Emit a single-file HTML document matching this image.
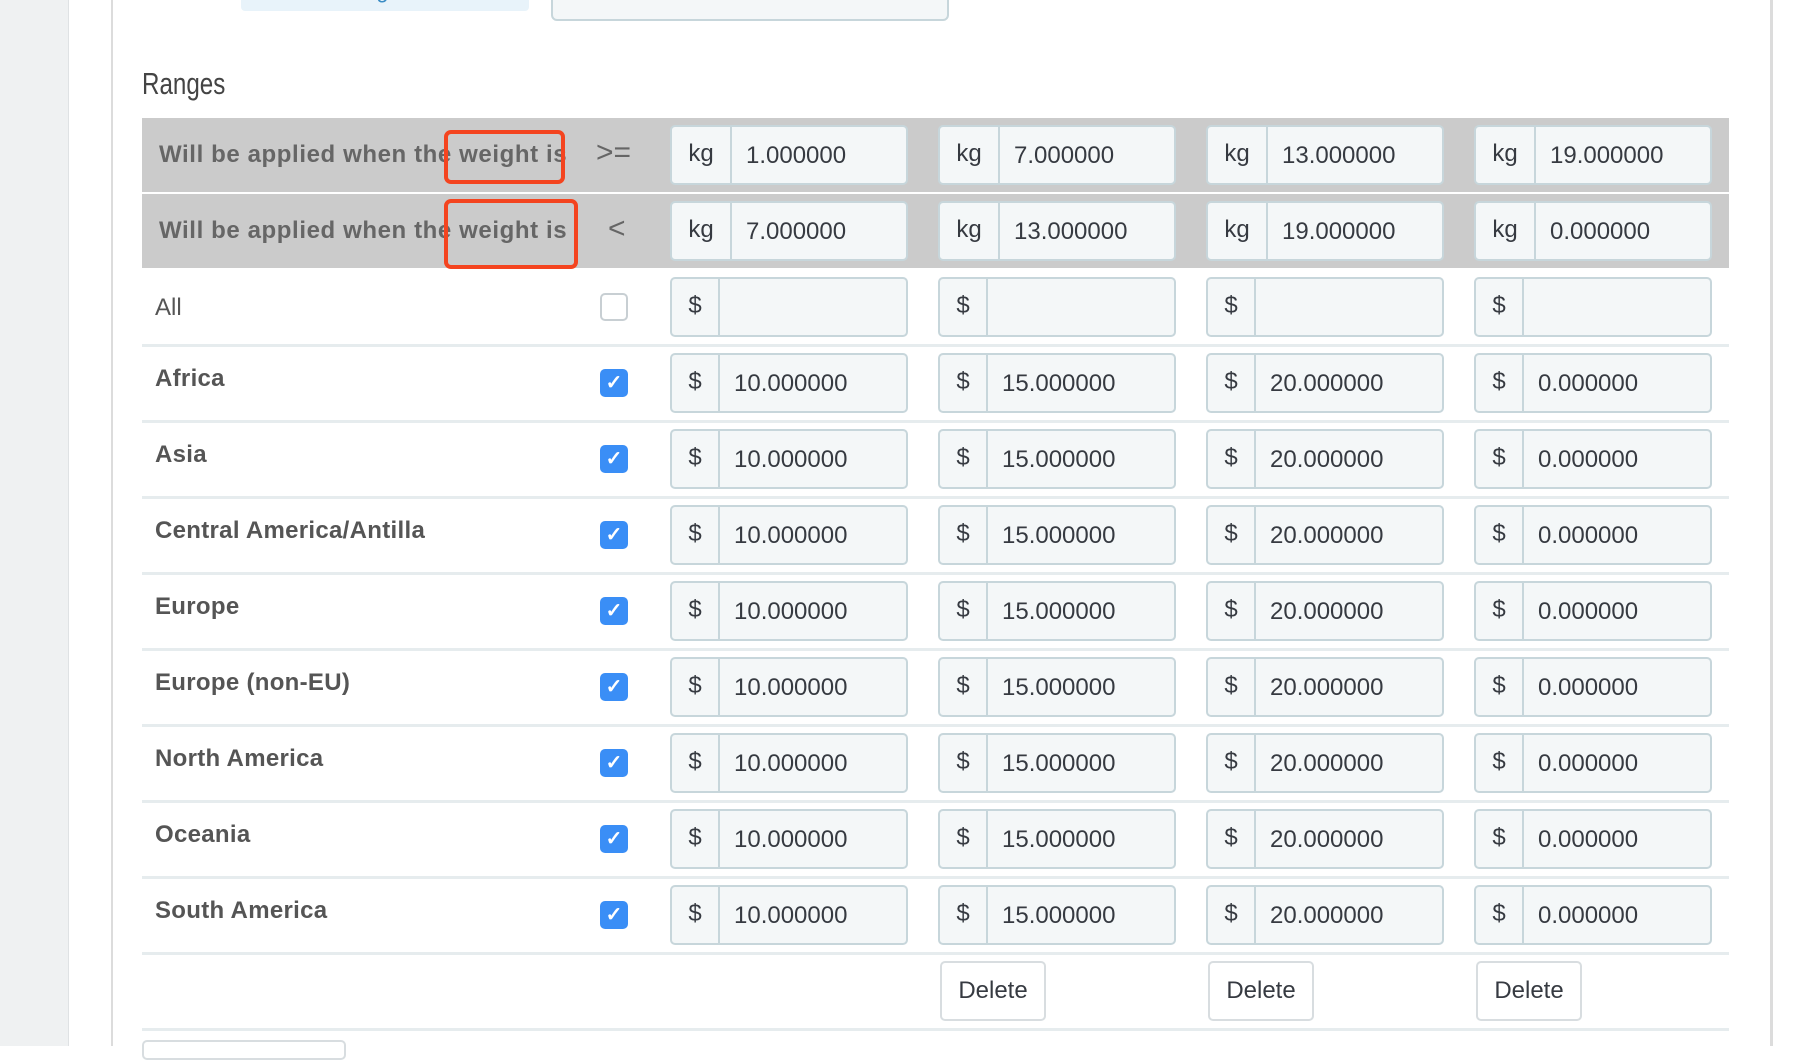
<!DOCTYPE html>
<html><head><meta charset="utf-8"><style>
*{box-sizing:border-box;margin:0;padding:0}
body{width:1802px;height:1046px;overflow:hidden;background:#fff;font-family:"Liberation Sans",sans-serif;position:relative}
.a{position:absolute}
.ig{position:absolute;width:238px;height:60px;border:2px solid #c7d6db;border-radius:5px;background:#f4f7f8;color:#363a41;font-size:24px}
.ig .ad{position:absolute;left:0;top:0;bottom:0;border-right:2px solid #c7d6db;text-align:center;line-height:54px}
.ig .v{position:absolute;top:0;line-height:58px}
.lbl{position:absolute;left:155px;font-weight:bold;font-size:24px;color:#555;letter-spacing:0.3px}
.cb{position:absolute;left:600px;width:28px;height:28px;border-radius:5px;background:#3a8ef6;color:#fff;text-align:center;line-height:28px;font-size:20px;font-weight:bold}
.sep{position:absolute;left:142px;width:1587px;height:3px;background:#e6ecee}
.btn{position:absolute;top:961px;width:106px;height:60px;border:2px solid #d8dde0;border-radius:5px;background:#fff;font-size:24px;color:#363a41;text-align:center;line-height:56px}
.hd{position:absolute;left:142px;width:1587px;height:74px;background:#cbcbcb}
.ht{position:absolute;left:159px;font-weight:bold;font-size:24px;color:#666;letter-spacing:0.6px}
.red{position:absolute;border:4px solid #f4441f;border-radius:7px}
</style></head><body>
<div class="a" style="left:0;top:0;width:69px;height:1046px;background:#eff1f2;border-right:1px solid #dfe2e4"></div>
<div class="a" style="left:111px;top:0;width:2px;height:1046px;background:#dcdcdc"></div>
<div class="a" style="left:1770px;top:0;width:3px;height:1046px;background:#dcdcdc"></div>
<div class="a" style="left:241px;top:-20px;width:288px;height:31px;background:#e8f3fa;border-radius:4px;color:#3a8cc4;font-size:22px;line-height:22px;text-align:center">Out of range behavior</div>
<div class="a" style="left:551px;top:-30px;width:398px;height:51px;background:#f4f7f8;border:2px solid #c7d6db;border-radius:6px"></div>
<div class="a" style="left:142px;top:66px;font-size:31px;color:#444;transform:scaleX(0.78);transform-origin:left">Ranges</div>

<div class="hd" style="top:118px"></div>
<div class="hd" style="top:194px"></div>
<div class="ht" style="top:141px">Will be applied when the weight is</div>
<div class="ht" style="top:217px">Will be applied when the weight is</div>
<div class="a" style="left:596px;top:136px;font-size:30px;color:#666">&gt;=</div>
<div class="a" style="left:608px;top:212px;font-size:30px;color:#666">&lt;</div>
<div class="red" style="left:444px;top:130px;width:121px;height:54px"></div>
<div class="red" style="left:444px;top:199px;width:134px;height:70px"></div>

<div id="g"></div>
<div class="btn" style="left:940px">Delete</div>
<div class="btn" style="left:1208px">Delete</div>
<div class="btn" style="left:1476px">Delete</div>
<div class="sep" style="top:1028px"></div>
<div class="a" style="left:142px;top:1040px;width:204px;height:20px;border:2px solid #d8dde0;border-radius:5px"></div>
<script>
var cols=[670,938,1206,1474],h='';
var r1=['1.000000','7.000000','13.000000','19.000000'],r2=['7.000000','13.000000','19.000000','0.000000'];
function grp(x,y,ad,aw,v){return '<div class="ig" style="left:'+x+'px;top:'+y+'px"><div class="ad" style="width:'+aw+'px">'+ad+'</div><div class="v" style="left:'+(aw+14)+'px">'+v+'</div></div>';}
for(var i=0;i<4;i++){h+=grp(cols[i],125,'kg',60,r1[i]);h+=grp(cols[i],201,'kg',60,r2[i]);h+=grp(cols[i],277,'$',48,'');}
h+='<div class="a" style="left:155px;top:294px;font-size:24px;color:#555">All</div><div class="a" style="left:600px;top:293px;width:28px;height:28px;border:2px solid #c8cfd3;border-radius:5px;background:#fff"></div>';
var names=['Africa','Asia','Central America/Antilla','Europe','Europe (non-EU)','North America','Oceania','South America'];
var vals=['10.000000','15.000000','20.000000','0.000000'];
for(var r=0;r<8;r++){var s=345+r*76;h+='<div class="sep" style="top:'+(s-1)+'px"></div>';
h+='<div class="lbl" style="top:'+(s+20)+'px">'+names[r]+'</div><div class="cb" style="top:'+(s+24)+'px">&#10003;</div>';
for(var i=0;i<4;i++)h+=grp(cols[i],s+8,'$',48,vals[i]);}
h+='<div class="sep" style="top:952px"></div>';
document.getElementById('g').innerHTML=h;
</script>
</body></html>
